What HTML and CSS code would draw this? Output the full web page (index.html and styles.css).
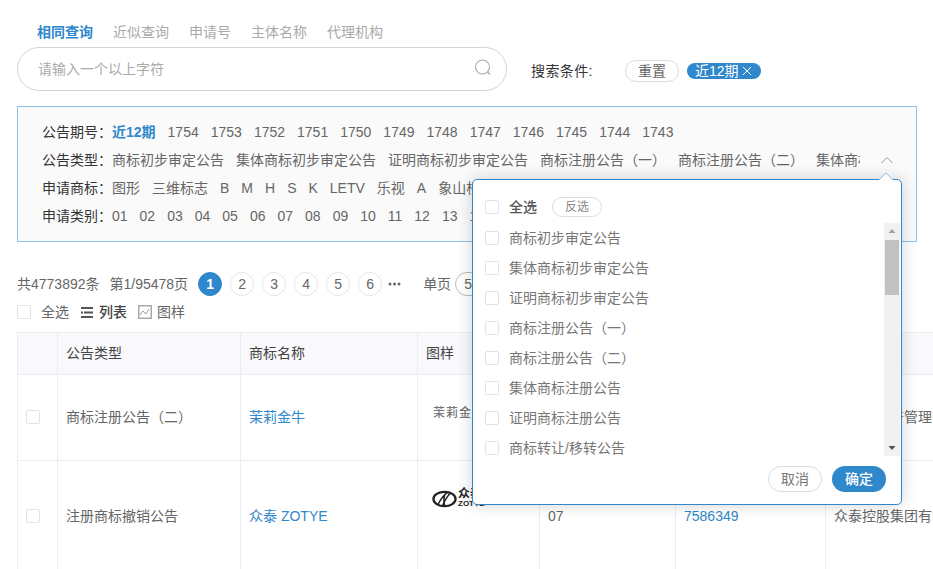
FILE: index.html
```html
<!DOCTYPE html>
<html lang="zh-CN">
<head>
<meta charset="utf-8">
<title>公告查询</title>
<link rel="stylesheet" href="styles.css">
</head>
<body>
<div class="page">
  <div class="tabs">
    <span class="tab active">相同查询</span>
    <span class="tab">近似查询</span>
    <span class="tab">申请号</span>
    <span class="tab">主体名称</span>
    <span class="tab">代理机构</span>
  </div>

  <div class="search-row">
    <div class="search-box">
      <input class="search-input" type="text" placeholder="请输入一个以上字符">
      <svg class="search-icon" width="18" height="18" viewBox="0 0 18 18"><circle cx="8.5" cy="8" r="7" fill="none" stroke="#aaa" stroke-width="1.1"/><path d="M13.6 13l2.4 2.6" fill="none" stroke="#aaa" stroke-width="1.3"/></svg>
    </div>
    <span class="cond-label">搜索条件:</span>
    <span class="pill reset">重置</span>
    <span class="tag">近12期<svg width="10" height="10" viewBox="0 0 11 11"><path d="M1 1l9 9M10 1l-9 9" stroke="#fff" stroke-width="1.1" fill="none"/></svg></span>
  </div>

  <div class="filter">
    <div class="f-row">
      <span class="f-label">公告期号：</span>
      <div class="f-values">
        <span class="sel">近12期</span><span>1754</span><span>1753</span><span>1752</span><span>1751</span><span>1750</span><span>1749</span><span>1748</span><span>1747</span><span>1746</span><span>1745</span><span>1744</span><span>1743</span>
      </div>
    </div>
    <div class="f-row">
      <span class="f-label">公告类型：</span>
      <div class="f-values">
        <span>商标初步审定公告</span><span>集体商标初步审定公告</span><span>证明商标初步审定公告</span><span>商标注册公告（一）</span><span>商标注册公告（二）</span><span>集体商标注册公告</span>
      </div>
      <svg class="chev" width="14" height="8" viewBox="0 0 14 8"><path d="M1.5 7L7 1.5 12.500 7" fill="none" stroke="#999" stroke-width="1"/></svg>
    </div>
    <div class="f-row">
      <span class="f-label">申请商标：</span>
      <div class="f-values">
        <span>图形</span><span>三维标志</span><span>B</span><span>M</span><span>H</span><span>S</span><span>K</span><span>LETV</span><span>乐视</span><span>A</span><span>象山桥</span>
      </div>
    </div>
    <div class="f-row">
      <span class="f-label">申请类别：</span>
      <div class="f-values">
        <span>01</span><span>02</span><span>03</span><span>04</span><span>05</span><span>06</span><span>07</span><span>08</span><span>09</span><span>10</span><span>11</span><span>12</span><span>13</span><span>14</span>
      </div>
    </div>
  </div>

  <div class="pager">
    <span class="count">共4773892条</span>
    <span class="count pages">第1/95478页</span>
    <div class="nums">
      <span class="num current">1</span><span class="num">2</span><span class="num">3</span><span class="num">4</span><span class="num">5</span><span class="num">6</span>
    </div>
    <svg class="dots" width="13" height="4" viewBox="0 0 13 4"><circle cx="2" cy="2" r="1.500" fill="#666"/><circle cx="6.500" cy="2" r="1.500" fill="#666"/><circle cx="11" cy="2" r="1.500" fill="#666"/></svg>
    <span class="count per">单页</span>
    <span class="per-pill">50条</span>
  </div>

  <div class="toolbar">
    <span class="check"></span>
    <span class="all">全选</span>
    <svg class="ic-list" width="12" height="11" viewBox="0 0 12 11"><path d="M0 1h12M3 5.500h9M0 10h12" stroke="#555" stroke-width="2" fill="none"/><path d="M0 4.500h2v2H0z" fill="#555"/></svg>
    <span class="view on">列表</span>
    <svg class="ic-pic" width="14" height="14" viewBox="0 0 14 14"><rect x=".75" y=".75" width="12.500" height="12.500" fill="none" stroke="#aaa" stroke-width="1.500"/><path d="M2 10l3-4 3 3 3-5" fill="none" stroke="#999"/></svg>
    <span class="view">图样</span>
  </div>

  <div class="table-wrap">
    <table class="grid">
      <colgroup><col class="c1"><col class="c2"><col class="c3"><col class="c4"><col class="c5"><col class="c6"><col class="c7"></colgroup>
      <thead>
        <tr><th></th><th>公告类型</th><th>商标名称</th><th>图样</th><th>类别</th><th>申请号</th><th>申请人</th></tr>
      </thead>
      <tbody>
        <tr class="r1">
          <td><span class="check"></span></td>
          <td>商标注册公告（二）</td>
          <td class="link">茉莉金牛</td>
          <td><div class="mark-text">茉莉金牛</div></td>
          <td>35</td>
          <td class="link">7586348</td>
          <td>新金牛资产管理有限公司</td>
        </tr>
        <tr class="r2">
          <td><span class="check"></span></td>
          <td>注册商标撤销公告</td>
          <td class="link">众泰 ZOTYE</td>
          <td>
            <div class="mark-logo">
              <svg width="25" height="18" viewBox="0 0 26 18"><ellipse cx="13" cy="9" rx="11.500" ry="7.500" fill="none" stroke="#222" stroke-width="2.400"/><path d="M6 15C9 9 12 5 16 2M11 16c2-5 4-9 8-13M13 5c-1 4-1 7 0 11" fill="none" stroke="#222" stroke-width="1.600"/></svg>
              <div class="logo-words"><b>众泰</b><b class="small">ZOTYE</b></div>
            </div>
          </td>
          <td>07</td>
          <td class="link">7586349</td>
          <td>众泰控股集团有限公司</td>
        </tr>
      </tbody>
    </table>
  </div>

  <div class="popup">
    <svg class="popup-arrow" width="14" height="8" viewBox="0 0 14 8"><path d="M0 8L7 1l7 7" fill="#fff" stroke="#8fc1e6"/></svg>
    <div class="popup-head">
      <span class="check"></span>
      <span class="head-all">全选</span>
      <span class="pill invert">反选</span>
    </div>
    <div class="popup-body">
      <div class="opts">
        <div class="opt"><span class="check"></span>商标初步审定公告</div>
        <div class="opt"><span class="check"></span>集体商标初步审定公告</div>
        <div class="opt"><span class="check"></span>证明商标初步审定公告</div>
        <div class="opt"><span class="check"></span>商标注册公告（一）</div>
        <div class="opt"><span class="check"></span>商标注册公告（二）</div>
        <div class="opt"><span class="check"></span>集体商标注册公告</div>
        <div class="opt"><span class="check"></span>证明商标注册公告</div>
        <div class="opt"><span class="check"></span>商标转让/移转公告</div>
        <div class="opt"><span class="check"></span>商标注销公告</div>
      </div>
      <div class="scrollbar">
        <svg class="sb-btn" width="16" height="17" viewBox="0 0 16 17"><path d="M4.500 10L8 6l3.500 4z" fill="#a3a3a3"/></svg>
        <div class="sb-track"><div class="sb-thumb"></div></div>
        <svg class="sb-btn" width="16" height="17" viewBox="0 0 16 17"><path d="M4.500 7L8 11l3.500-4z" fill="#505050"/></svg>
      </div>
    </div>
    <div class="popup-foot">
      <span class="btn cancel">取消</span>
      <span class="btn ok">确定</span>
    </div>
  </div>
</div>
</body>
</html>
```
FILE: styles.css
```css
* { box-sizing: border-box; }
html, body { margin: 0; padding: 0; background: #fff; }
body {
  font-family: "Liberation Sans", "Noto Sans CJK SC", sans-serif;
  font-size: 14px;
  line-height: 20px;
  color: #666;
  width: 933px;
  height: 569px;
  overflow: hidden;
}
.page {
  position: relative;
  width: 933px;
  height: 569px;
  overflow: hidden;
  padding: 21px 0 0 17px;
}
.tabs { display: flex; gap: 20px; padding-left: 20px; line-height: 22px; height: 22px; font-size: 14px; }
.tab { color: #aaa; }
.tab.active { color: #2f87cc; font-weight: 700; }

.search-row { display: flex; align-items: center; margin-top: 4px; height: 44px; }
.search-box {
  display: flex; align-items: center;
  width: 490px; height: 44px;
  border: 1px solid #d4d4d4; border-radius: 22px;
  padding: 0 14px 0 20px;
}
.search-input {
  flex: 1; min-width: 0; border: 0; outline: 0; padding: 0; background: transparent;
  font: 14px "Liberation Sans", "Noto Sans CJK SC", sans-serif; color: #666;
}
.search-input::placeholder { color: #aaa; opacity: 1; }
.search-icon { flex: none; margin-top: -2px; }
.cond-label { margin-left: 24px; width: 62px; color: #333; padding-top: 3px; letter-spacing: .4px; }
.pill {
  display: inline-flex; align-items: center; justify-content: center;
  border: 1px solid #ddd; border-radius: 11px; color: #666; background: #fff;
}
.reset { width: 54px; height: 22px; margin-left: 32px; margin-top: 3px; }
.tag {
  display: inline-flex; align-items: center; gap: 3px;
  height: 16px; width: 74px; margin-left: 8px; margin-top: 3px; padding-left: 8px;
  border-radius: 8px; background: #2f87cc; color: #fff;
}

.filter {
  width: 900px; height: 136px; margin-top: 15px;
  border: 1px solid #8fc1e6; background: #fafafa;
  padding: 11px 0 0 24px;
}
.f-row { display: flex; align-items: center; height: 28px; white-space: nowrap; }
.f-label { width: 70px; flex: none; color: #333; }
.f-values { display: flex; gap: 12px; width: 748px; flex: none; overflow: hidden; }
.f-values span { flex: none; }
.f-values .sel { color: #2f87cc; font-weight: 700; }
.chev { flex: none; margin-left: 20px; }

.pager { display: flex; align-items: center; height: 24px; margin-top: 30px; white-space: nowrap; }
.pages { margin-left: 10px; }
.nums { display: flex; gap: 8px; margin-left: 10px; }
.num {
  display: flex; align-items: center; justify-content: center;
  width: 24px; height: 24px; border: 1px solid #e6e6e6; border-radius: 50%; color: #666; background: #fff;
}
.num.current { background: #2f87cc; border-color: #2f87cc; color: #fff; font-weight: 700; }
.dots { margin-left: 6px; }
.per { margin-left: 22px; }
.per-pill {
  display: flex; align-items: center; height: 24px; width: 70px; margin-left: 4px; padding-left: 8px;
  border: 1px solid #bbb; border-radius: 12px;
}

.toolbar { display: flex; align-items: center; height: 20px; margin-top: 6px; }
.check {
  display: inline-block; flex: none; width: 14px; height: 14px;
  border: 1px solid #e2e2e8; border-radius: 2px; background: #fff;
}
.all { margin-left: 10px; }
.ic-list { margin-left: 12px; }
.view { margin-left: 6px; }
.view.on { color: #444; font-weight: 500; }
.ic-pic { margin-left: 11px; margin-right: -1px; }

.table-wrap { width: 916px; margin-top: 10px; overflow: hidden; }
.grid { border-collapse: collapse; table-layout: fixed; width: 1108px; }
.c1 { width: 40px; } .c2 { width: 183px; } .c3 { width: 177px; } .c4 { width: 122px; }
.c5 { width: 136px; } .c6 { width: 150px; } .c7 { width: 300px; }
.grid th, .grid td {
  border: 1px solid #ebedf4; padding: 0 8px; text-align: left; vertical-align: middle; white-space: nowrap; overflow: hidden;
}
.grid th { height: 42px; padding-bottom: 2px; background: #f9f9fb; color: #444; font-weight: 400; }
.r1 td { height: 86px; padding-bottom: 2px; }
.r2 td { height: 110px; }
.grid td .check { display: block; }
.link { color: #2f87cc; }
.mark-text {
  font-family: "Liberation Serif", "Noto Sans CJK SC", serif;
  font-size: 12px; font-weight: 500; letter-spacing: 1px; color: #777;
  margin: -8px 0 0 7px;
}
.mark-logo { display: flex; align-items: center; gap: 1px; margin: -36px 0 0 6px; transform: translateY(10px); color: #222; }
.logo-words { display: flex; flex-direction: column; line-height: 9px; font-size: 12px; color: #222; }
.logo-words .small { font-size: 8px; }

.popup {
  position: absolute; left: 472px; top: 179px;
  width: 430px; height: 326px;
  background: #fff; border: 1px solid #2f87cc; border-radius: 5px;
  box-shadow: 0 0 16px rgba(0, 0, 0, .18);
}
.popup-arrow { position: absolute; right: 8px; top: -8px; }
.popup-head { display: flex; align-items: center; height: 43px; padding: 11px 0 0 12px; }
.head-all { margin-left: 10px; color: #555; font-weight: 500; }
.invert { width: 50px; height: 20px; margin-left: 15px; font-size: 12px; color: #888; }
.popup-body { display: flex; height: 233px; overflow: hidden; }
.opts { flex: 1; padding-left: 12px; }
.opt { display: flex; align-items: center; gap: 10px; height: 30px; color: #777; white-space: nowrap; }
.scrollbar {
  display: flex; flex-direction: column; width: 16px; margin-right: 1px; background: #f1f1f1;
}
.sb-btn { flex: none; }
.sb-track { flex: 1; }
.sb-thumb { height: 55px; width: 14px; margin-left: 1px; background: #c1c1c1; }
.popup-foot { display: flex; justify-content: flex-end; gap: 10px; padding: 10px 15px 0 0; }
.btn {
  display: flex; align-items: center; justify-content: center;
  width: 54px; height: 26px; border-radius: 13px; font-size: 14px;
}
.cancel { border: 1px solid #ddd; color: #777; background: #fff; }
.ok { background: #2f87cc; color: #fff; font-weight: 500; }
```
